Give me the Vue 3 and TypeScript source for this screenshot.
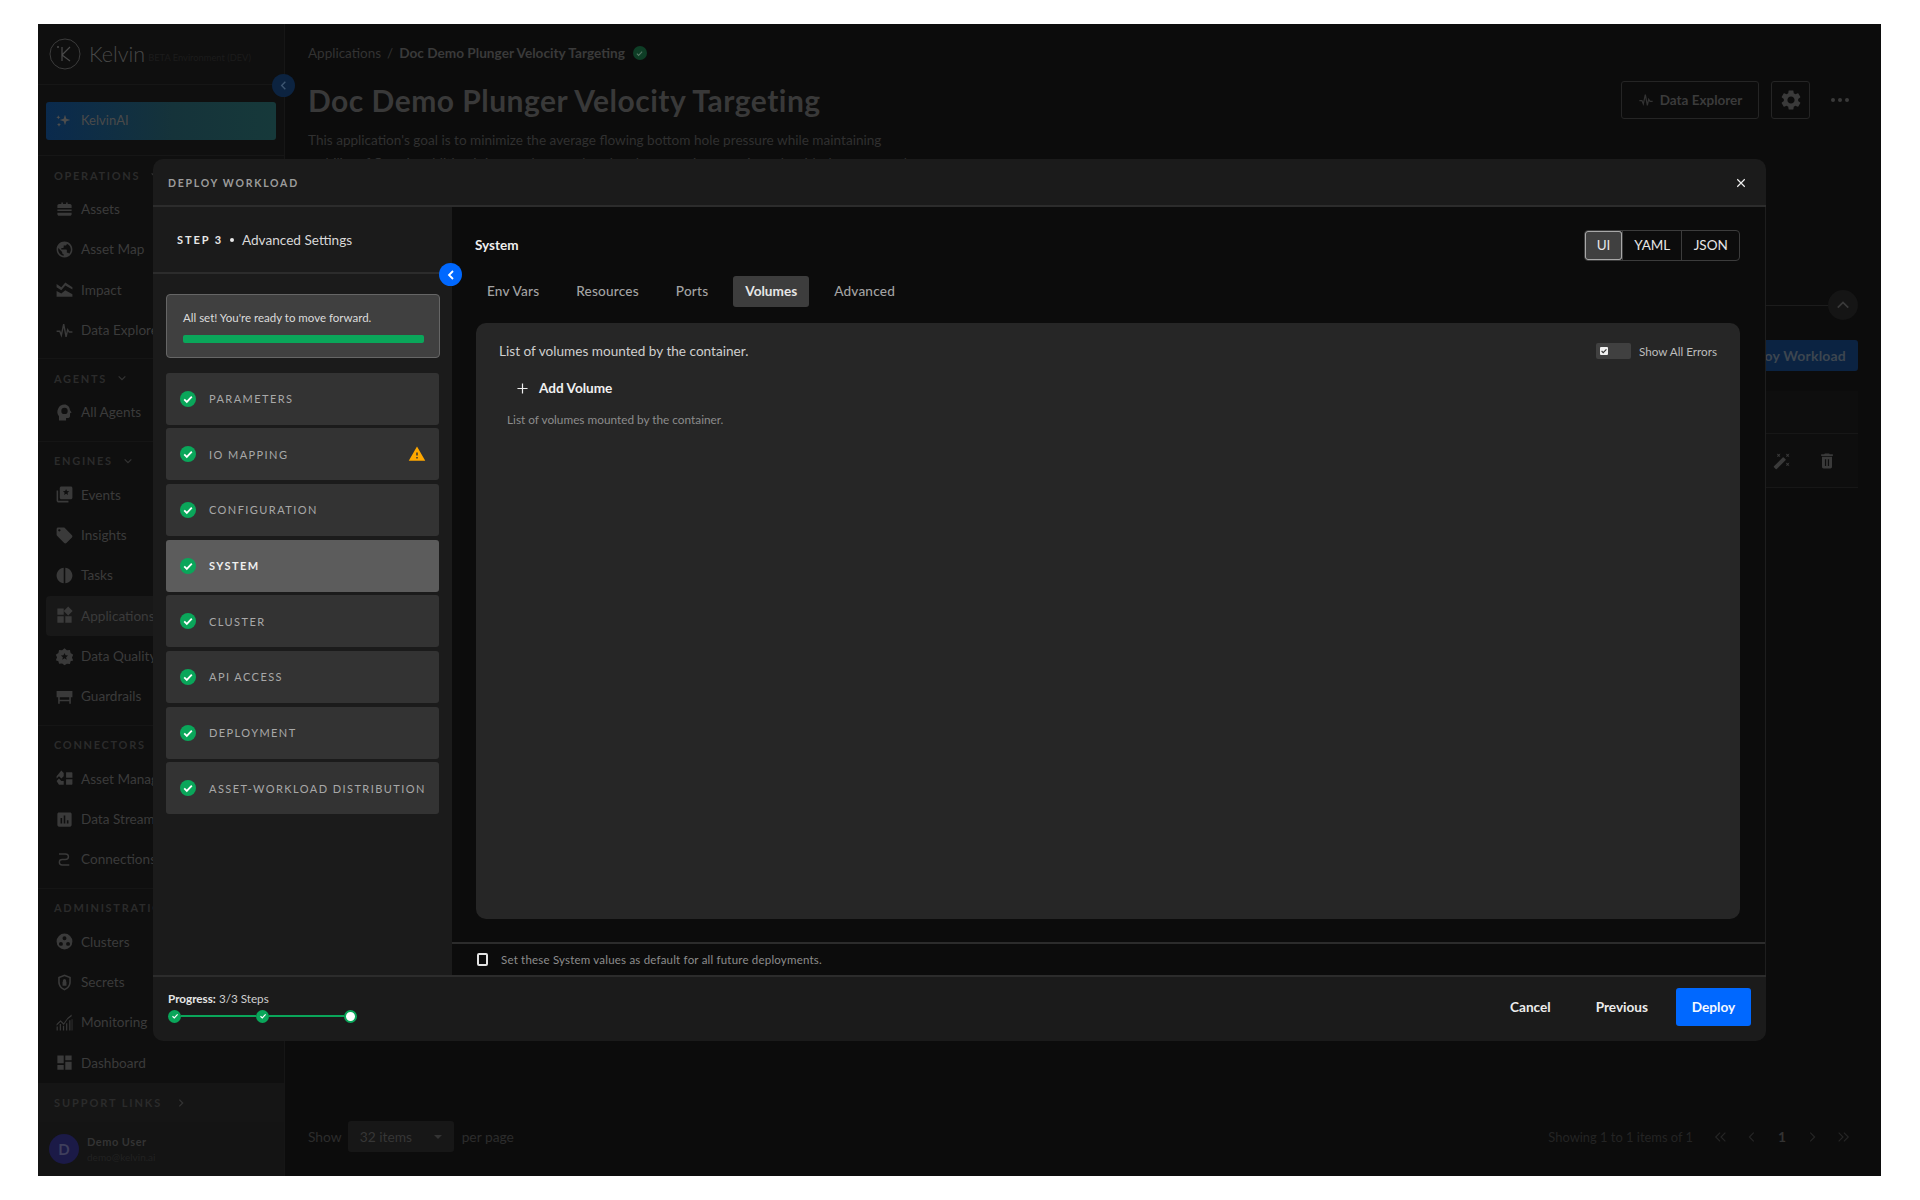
<script setup lang="ts">
import { ref } from 'vue'

interface NavItem { label: string; icon: string; stroke?: boolean; active?: boolean }
interface NavSection { title: string; chevron?: boolean; items: NavItem[] }

const P = {
  assets: 'M8 5V3h2v2h4V3h2v2h3c1 0 2 1 2 2v3H3V7c0-1 1-2 2-2h3zM3 12h18v2H3zM3 16h18v2c0 1-1 2-2 2H5c-1 0-2-1-2-2z',
  globe: 'M12 2C6.48 2 2 6.48 2 12s4.48 10 10 10 10-4.48 10-10S17.52 2 12 2zm-1 17.93c-3.95-.49-7-3.85-7-7.93 0-.62.08-1.21.21-1.79L9 15v1c0 1.1.9 2 2 2v1.93zm6.9-2.54c-.26-.81-1-1.39-1.9-1.39h-1v-3c0-.55-.45-1-1-1H8v-2h2c.55 0 1-.45 1-1V7h2c1.1 0 2-.9 2-2v-.41c2.93 1.19 5 4.06 5 7.41 0 2.08-.8 3.97-2.1 5.39z',
  impact: 'M2 5l6 4 5-6 9 6v3l-9-5-5 6-6-4zM2 14l6 3 5-4 9 5v3H2z',
  pulse: 'M2 13h4l2 5 3-14 3 16 2-9 2 3h4',
  agent: 'M12 2a9 9 0 0 0-7 14.6V22h9v-3h2c1.6 0 3-1.4 3-3v-3l2-1-2-3c-.6-4.2-3.4-7-7-7zm0 4a4 4 0 1 1-.01 8.01A4 4 0 0 1 12 6z',
  events: 'M2 7h2v13h13v2H4c-1.1 0-2-.9-2-2zM8 2h12c1.1 0 2 .9 2 2v12c0 1.1-.9 2-2 2H8c-1.1 0-2-.9-2-2V4c0-1.1.9-2 2-2zm6 3l-1.1 2.7-2.9.2 2.2 1.9-.7 2.8 2.5-1.5 2.5 1.5-.7-2.8L18 7.9l-2.9-.2z',
  tag: 'M21.41 11.58l-9-9C12.05 2.22 11.55 2 11 2H4c-1.1 0-2 .9-2 2v7c0 .55.22 1.05.59 1.42l9 9c.36.36.86.58 1.41.58.55 0 1.05-.22 1.41-.59l7-7c.37-.36.59-.86.59-1.41 0-.55-.23-1.06-.59-1.42zM5.5 7C4.67 7 4 6.33 4 5.5S4.67 4 5.5 4 7 4.67 7 5.5 6.33 7 5.5 7z',
  tasks: 'M11 2.1v19.8C5.9 21.4 2 17.1 2 12S5.9 2.6 11 2.1zM13 2.1c5.1.5 9 4.8 9 9.9s-3.9 9.4-9 9.9z',
  widgets: 'M13 13v8h8v-8h-8zM3 21h8v-8H3v8zM3 3v8h8V3H3zm13.66-2.34L11 6.31l5.66 5.66 5.66-5.66-5.66-5.65z',
  quality: 'M12 1.5l3 2.6 3.9-.3.8 3.8 3.3 2.1-1.6 3.6 1.6 3.6-3.3 1.2-.8 3.3-3.9-.3L12 23l-3-2.1-3.9.3-.8-3.3L1 16.7l1.6-3.6L1 9.7l3.3-2.1.8-3.8 3.9.3zM12 7.5l-1.3 3-3.2.2 2.5 2.1-.8 3.2 2.8-1.7 2.8 1.7-.8-3.2 2.5-2.1-3.2-.2z',
  guard: 'M2 5h20v8H2zM4 13h2v3h12v-3h2v8h-2v-3H6v3H4z',
  puzzle: 'M14 4h7c.6 0 1 .4 1 1v6h-8zM14 13h8v6c0 .6-.4 1-1 1h-7zM8 2l3 3v4l-3 3-3-3-3 3V9zM2 15l3-3 3 3 3 0v5H5z',
  chart: 'M19 3H5c-1.1 0-2 .9-2 2v14c0 1.1.9 2 2 2h14c1.1 0 2-.9 2-2V5c0-1.1-.9-2-2-2zM9 17H7v-7h2v7zm4 0h-2V7h2v10zm4 0h-2v-4h2v4z',
  route: 'M5 5h8c2.5 0 4 1.5 4 3.5S15.5 12 13 12H9c-2 0-3.500 1.500-3.500 3.500S7 19 9 19h9',
  cluster: 'M12 2a10 10 0 1 0 0 20 10 10 0 0 0 0-20zm0 3.500a2.500 2.500 0 1 1 0 5 2.500 2.500 0 0 1 0-5zM7.500 12.500a2.500 2.500 0 1 1 0 5 2.500 2.500 0 0 1 0-5zm9 0a2.500 2.500 0 1 1 0 5 2.500 2.500 0 0 1 0-5z',
  shield: 'M12 2l8 3v6.500c0 5-3.400 9.100-8 10.500-4.600-1.400-8-5.500-8-10.500V5zM12 4.100L6 6.400v5.100c0 3.900 2.500 7.200 6 8.400 3.500-1.200 6-4.500 6-8.400V6.400zM12 7.500a2 2 0 0 1 2 2V11h.500v5h-5v-5H10V9.500a2 2 0 0 1 2-2z',
  monitor: 'M2 14l5-5 4 4 5-7 5-4v2l-5 4-5 7-4-4-5 5zM2 17h1.500v5H2zM6 14h1.500v8H6zM10 16h1.500v6H10zM14 13h1.500v9H14zM18 9h1.500v13H18zM21 8h1v14h-1z',
  dash: 'M3 13h8V3H3v10zm0 8h8v-6H3v6zm10 0h8V11h-8v10zm0-18v6h8V3h-8z',
}

const sections: NavSection[] = [
  { title: 'OPERATIONS', chevron: true, items: [
    { label: 'Assets', icon: P.assets },
    { label: 'Asset Map', icon: P.globe },
    { label: 'Impact', icon: P.impact },
    { label: 'Data Explorer', icon: P.pulse, stroke: true },
  ] },
  { title: 'AGENTS', chevron: true, items: [{ label: 'All Agents', icon: P.agent }] },
  { title: 'ENGINES', chevron: true, items: [
    { label: 'Events', icon: P.events },
    { label: 'Insights', icon: P.tag },
    { label: 'Tasks', icon: P.tasks },
    { label: 'Applications', icon: P.widgets, active: true },
    { label: 'Data Quality', icon: P.quality },
    { label: 'Guardrails', icon: P.guard },
  ] },
  { title: 'CONNECTORS', items: [
    { label: 'Asset Management', icon: P.puzzle },
    { label: 'Data Streams', icon: P.chart },
    { label: 'Connections', icon: P.route, stroke: true },
  ] },
  { title: 'ADMINISTRATION', items: [
    { label: 'Clusters', icon: P.cluster },
    { label: 'Secrets', icon: P.shield },
    { label: 'Monitoring', icon: P.monitor },
    { label: 'Dashboard', icon: P.dash },
  ] },
]

const steps = ['PARAMETERS', 'IO MAPPING', 'CONFIGURATION', 'SYSTEM', 'CLUSTER', 'API ACCESS', 'DEPLOYMENT', 'ASSET-WORKLOAD DISTRIBUTION']
const tabs = ['Env Vars', 'Resources', 'Ports', 'Volumes', 'Advanced']
const activeTab = ref('Volumes')
const formats = ['UI', 'YAML', 'JSON']
const activeFormat = ref('UI')
const showErrors = ref(true)
const useDefault = ref(false)
const gear = 'M19.14 12.94c.04-.3.06-.61.06-.94 0-.32-.02-.64-.07-.94l2.03-1.58c.18-.14.23-.41.12-.61l-1.92-3.32c-.12-.22-.37-.29-.59-.22l-2.39.96c-.5-.38-1.03-.7-1.62-.94l-.36-2.54c-.04-.24-.24-.41-.48-.41h-3.84c-.24 0-.43.17-.47.41l-.36 2.54c-.59.24-1.13.57-1.62.94l-2.39-.96c-.22-.08-.47 0-.59.22L2.74 8.87c-.12.21-.08.47.12.61l2.03 1.58c-.05.3-.09.63-.09.94s.02.64.07.94l-2.03 1.58c-.18.14-.23.41-.12.61l1.92 3.32c.12.22.37.29.59.22l2.39-.96c.5.38 1.03.7 1.62.94l.36 2.54c.05.24.24.41.48.41h3.84c.24 0 .44-.17.47-.41l.36-2.54c.59-.24 1.13-.56 1.62-.94l2.39.96c.22.08.47 0 .59-.22l1.92-3.32c.12-.22.07-.47-.12-.61l-2.01-1.58zM12 15.6c-1.98 0-3.6-1.62-3.6-3.6s1.62-3.6 3.6-3.6 3.6 1.62 3.6 3.6-1.62 3.6-3.6 3.6z'
</script>

<template>
  <div class="frame">
    <aside class="sidebar">
      <div class="logo-row">
        <svg class="logo-mark" viewBox="0 0 32 32" width="32" height="32">
          <circle cx="16" cy="16" r="15" fill="none" stroke="#3c3c3c" stroke-width="1" />
          <path d="M13 9v14M21 9l-8 8 8 6" fill="none" stroke="#4a4a4a" stroke-width="1.200" />
          <circle cx="9" cy="9" r="1" fill="#4a4a4a" />
        </svg>
        <span class="logo-text">Kelvin</span>
        <span class="logo-env">BETA Environment (DEV)</span>
      </div>
      <div class="ai-wrap">
        <div class="ai-btn">
          <svg viewBox="0 0 24 24" width="16" height="16"><path fill="#4d4d4d" d="M15 4l2 6 6 2-6 2-2 6-2-6-6-2 6-2zM5 5l1 2 2 1-2 1-1 2-1-2-2-1 2-1zM6 16l1 2 2 1-2 1-1 2-1-2-2-1 2-1z" /></svg>
          <span>KelvinAI</span>
        </div>
      </div>
      <section v-for="s in sections" :key="s.title" class="nav-section">
        <div class="nav-title">
          <span>{{ s.title }}</span>
          <svg v-if="s.chevron" viewBox="0 0 12 12" width="10" height="10"><path d="M2 4l4 4 4-4" fill="none" stroke="#333" stroke-width="1.500" /></svg>
        </div>
        <div v-for="i in s.items" :key="i.label" class="nav-item" :class="{ active: i.active }">
          <svg viewBox="0 0 24 24" width="19" height="19">
            <path :d="i.icon" :fill="i.stroke ? 'none' : '#3a3a3a'" :stroke="i.stroke ? '#3a3a3a' : 'none'" :stroke-width="i.stroke ? 1.800 : 0" />
          </svg>
          <span>{{ i.label }}</span>
        </div>
      </section>
      <div class="support">
        <span>SUPPORT LINKS</span>
        <svg viewBox="0 0 12 12" width="10" height="10"><path d="M4 2l4 4-4 4" fill="none" stroke="#333" stroke-width="1.500" /></svg>
      </div>
      <div class="user">
        <div class="avatar">D</div>
        <div class="user-meta">
          <div class="user-name">Demo User</div>
          <div class="user-mail">demo@kelvin.ai</div>
        </div>
      </div>
    </aside>

    <main class="main">
      <div class="crumbs">
        <span>Applications</span><span class="sep">/</span><b>Doc Demo Plunger Velocity Targeting</b>
        <span class="crumb-ok"><svg viewBox="0 0 12 12" width="9" height="9"><path d="M2.500 6.200l2.300 2.300 4.700-5" fill="none" stroke="#5a7a68" stroke-width="1.400" /></svg></span>
      </div>
      <div class="title-row">
        <h1>Doc Demo Plunger Velocity Targeting</h1>
        <div class="title-actions">
          <button class="ghost-btn">
            <svg viewBox="0 0 24 24" width="16" height="16"><path d="M2 13h4l2 5 3-14 3 16 2-9 2 3h4" fill="none" stroke="#333" stroke-width="1.800" /></svg>
            Data Explorer
          </button>
          <button class="ghost-btn square">
            <svg viewBox="0 0 24 24" width="24" height="24"><path :d="gear" fill="#3a3a3a" /></svg>
          </button>
          <span class="dots"><i></i><i></i><i></i></span>
        </div>
      </div>
      <p class="desc">This application's goal is to minimize the average flowing bottom hole pressure while maintaining<br />stability of flow. In addition it is to make sure that the plunger arrives consistently with the proper column</p>
      <div class="divider-row">
        <span class="line"></span>
        <span class="up-btn"><svg viewBox="0 0 16 16" width="14" height="14"><path d="M2 11l6-6 6 6" fill="none" stroke="#3a3a3a" stroke-width="2" /></svg></span>
      </div>
      <div class="deploy-row"><button class="deploy-behind">Deploy Workload</button></div>
      <div class="table">
        <div class="table-head"></div>
        <div class="table-row">
          <svg viewBox="0 0 24 24" width="18" height="18"><path fill="#3a3a3a" d="M7.500 5.600L10 7 8.600 4.500 10 2 7.500 3.400 5 2l1.400 2.500L5 7zm12 9.800L17 14l1.400 2.500L17 19l2.500-1.400L22 19l-1.400-2.500L22 14zM22 2l-2.500 1.400L17 2l1.400 2.500L17 7l2.500-1.400L22 7l-1.400-2.500zm-7.630 5.290a.996.996 0 0 0-1.410 0L1.290 18.960a.996.996 0 0 0 0 1.410l2.340 2.340c.39.39 1.020.39 1.410 0L16.700 11.050a.996.996 0 0 0 0-1.410l-2.330-2.350z" /></svg>
          <svg viewBox="0 0 24 24" width="20" height="20"><path fill="#3a3a3a" d="M6 19c0 1.100.9 2 2 2h8c1.100 0 2-.9 2-2V7H6v12zM9.500 10H11v8H9.500zM13 10h1.500v8H13zM19 4h-3.500l-1-1h-5l-1 1H5v2h14V4z" /></svg>
        </div>
      </div>
      <div class="pager">
        <span>Show</span>
        <div class="pager-select"><span>32 items</span><i></i></div>
        <span>per page</span>
        <span class="pager-count">Showing 1 to 1 items of 1</span>
        <span class="pager-nav">
          <svg viewBox="0 0 16 12" width="14" height="12"><path d="M7 1L2 6l5 5M13 1L8 6l5 5" fill="none" stroke="#262626" stroke-width="1.300" /></svg>
          <svg viewBox="0 0 16 12" width="14" height="12"><path d="M10 1L5 6l5 5" fill="none" stroke="#262626" stroke-width="1.300" /></svg>
          <b>1</b>
          <svg viewBox="0 0 16 12" width="14" height="12"><path d="M6 1l5 5-5 5" fill="none" stroke="#262626" stroke-width="1.300" /></svg>
          <svg viewBox="0 0 16 12" width="14" height="12"><path d="M3 1l5 5-5 5M9 1l5 5-5 5" fill="none" stroke="#262626" stroke-width="1.300" /></svg>
        </span>
      </div>
    </main>
    <span class="side-collapse"><svg viewBox="0 0 12 12" width="11" height="11"><path d="M8 2L4 6l4 4" fill="none" stroke="#3d5570" stroke-width="1.500" /></svg></span>

    <div class="modal">
      <header class="modal-head">
        <span>DEPLOY WORKLOAD</span>
        <svg viewBox="0 0 12 12" width="10" height="10"><path d="M1.500 1.500l9 9M10.500 1.500l-9 9" stroke="#f0f0f0" stroke-width="1.400" /></svg>
      </header>
      <div class="modal-body">
        <div class="wizard">
          <div class="wizard-step"><b>STEP 3</b><i></i><span>Advanced Settings</span></div>
          <span class="wizard-collapse"><svg viewBox="0 0 12 12" width="12" height="12"><path d="M8 2L4 6l4 4" fill="none" stroke="#fff" stroke-width="1.800" /></svg></span>
          <div class="wizard-inner">
            <div class="ready">
              <div class="ready-text">All set! You're ready to move forward.</div>
              <div class="ready-bar"></div>
            </div>
            <div v-for="s in steps" :key="s" class="step" :class="{ current: s === 'SYSTEM' }">
              <span class="ok"><svg viewBox="0 0 16 16" width="16" height="16"><path d="M4.200 8.400l2.600 2.500 5-5.200" fill="none" stroke="#fff" stroke-width="1.800" /></svg></span>
              <span class="step-name">{{ s }}</span>
              <svg v-if="s === 'IO MAPPING'" class="warn" viewBox="0 0 24 24" width="18" height="18"><path fill="#ffa800" d="M1 21h22L12 2 1 21zm12-3h-2v-2h2v2zm0-4h-2v-4h2v4z" /></svg>
            </div>
          </div>
        </div>
        <div class="panel">
          <div class="panel-main">
            <div class="panel-top">
              <strong>System</strong>
              <div class="segments">
                <button v-for="f in formats" :key="f" :class="{ on: activeFormat === f }" @click="activeFormat = f">{{ f }}</button>
              </div>
            </div>
            <nav class="tabs">
              <button v-for="t in tabs" :key="t" :class="{ on: activeTab === t }" @click="activeTab = t">{{ t }}</button>
            </nav>
            <div class="card">
              <div class="card-top">
                <span>List of volumes mounted by the container.</span>
                <label class="errors" @click="showErrors = !showErrors">
                  <span class="switch"><span class="knob"><svg viewBox="0 0 10 10" width="8" height="8"><path d="M2 5l2 2 4-4" fill="none" stroke="#333" stroke-width="1.400" /></svg></span></span>
                  Show All Errors
                </label>
              </div>
              <button class="add">
                <svg viewBox="0 0 12 12" width="11" height="11"><path d="M6 .5v11M.5 6h11" stroke="#eee" stroke-width="1.300" /></svg>
                Add Volume
              </button>
              <p class="hint">List of volumes mounted by the container.</p>
            </div>
          </div>
          <div class="defaults">
            <span class="box" :class="{ on: useDefault }" @click="useDefault = !useDefault"></span>
            <span>Set these System values as default for all future deployments.</span>
          </div>
        </div>
      </div>
      <footer class="modal-foot">
        <div class="progress">
          <div class="progress-label"><b>Progress:</b> 3/3 Steps</div>
          <div class="track">
            <span class="dot"><svg viewBox="0 0 12 12" width="12" height="12"><path d="M3.500 6.200l1.800 1.700 3.300-3.500" fill="none" stroke="#fff" stroke-width="1.200" /></svg></span>
            <span class="seg"></span>
            <span class="dot"><svg viewBox="0 0 12 12" width="12" height="12"><path d="M3.500 6.200l1.800 1.700 3.300-3.500" fill="none" stroke="#fff" stroke-width="1.200" /></svg></span>
            <span class="seg"></span>
            <span class="dot end"></span>
          </div>
        </div>
        <div class="foot-actions">
          <button class="text-btn cancel">Cancel</button>
          <button class="text-btn">Previous</button>
          <button class="primary">Deploy</button>
        </div>
      </footer>
    </div>
  </div>
</template>

<style>
html, body { margin: 0; background: #fff; }
</style>

<style scoped>
* { box-sizing: border-box; }
button { font-family: inherit; border: 0; background: none; padding: 0; cursor: pointer; }
.frame {
  position: relative; display: flex; width: 1843px; height: 1152px; margin: 24px 0 24px 38px;
  overflow: hidden; background: #0c0c0c; font-family: Lato, "Liberation Sans", sans-serif; color: #3c3c3c;
}
.sidebar { width: 247px; flex: none; display: flex; flex-direction: column; background: #0f0f0f; border-right: 1px solid #161616; }
.logo-row { height: 61px; flex: none; display: flex; align-items: center; padding: 0 0 0 11px; border-bottom: 1px solid #161616; white-space: nowrap; overflow: hidden; }
.logo-text { margin-left: 8px; font-size: 21.500px; font-weight: 300; color: #484848; }
.logo-env { margin: 6px 0 0 3px; font-size: 9.300px; color: #1c1c1c; }
.ai-wrap { flex: none; height: 71px; padding: 17px 8px 0; border-bottom: 1px solid #161616; }
.ai-btn { display: flex; align-items: center; gap: 10px; height: 38px; padding: 0 0 2px 9px; border-radius: 3px; font-size: 13px; color: #4a4a4a; background: linear-gradient(90deg, #0a2a4d, #15333a 55%, #16393a); }
.nav-section { flex: none; padding: 12px 0 8px 8px; border-bottom: 1px solid #151515; }
.nav-section:nth-of-type(5) { padding-bottom: 0; border-bottom: 0; }
.nav-title { display: flex; align-items: center; gap: 10px; height: 14px; margin: 0 0 7px 8px; font-size: 11px; font-weight: 700; letter-spacing: 1.700px; color: #2b2b2b; white-space: nowrap; }
.nav-item { display: flex; align-items: center; gap: 7px; height: 40.330px; padding-left: 9px; font-size: 13.600px; color: #3b3b3b; white-space: nowrap; border-radius: 4px; }
.nav-item.active { background: #181818; }
.support { flex: none; display: flex; align-items: center; gap: 14px; height: 39px; margin-top: auto; padding-left: 16px; background: #151515; font-size: 11px; font-weight: 700; letter-spacing: 1.900px; color: #2b2b2b; }
.user { flex: none; display: flex; align-items: center; gap: 8px; height: 54px; padding-left: 11px; background: #141414; }
.avatar { width: 30px; height: 30px; border-radius: 50%; display: flex; align-items: center; justify-content: center; background: #1b1a47; color: #3f3f5c; font-size: 15px; font-weight: 700; }
.user-name { font-size: 11px; font-weight: 700; letter-spacing: .5px; color: #333; }
.user-mail { margin-top: 3px; font-size: 10px; color: #222; }
.side-collapse { position: absolute; left: 234px; top: 50px; width: 23px; height: 23px; border-radius: 50%; display: flex; align-items: center; justify-content: center; background: #0c2340; }

.main { flex: 1; min-width: 0; display: flex; flex-direction: column; padding: 20px 23px 0 23px; }
.crumbs { display: flex; align-items: center; height: 18px; font-size: 13.500px; color: #333; white-space: nowrap; }
.crumbs b { font-size: 13.650px; font-weight: 700; color: #3a3a3a; }
.sep { margin: 0 6px; }
.crumb-ok { width: 14px; height: 14px; margin-left: 8px; border-radius: 50%; display: flex; align-items: center; justify-content: center; background: #0e3e26; }
.title-row { display: flex; justify-content: space-between; align-items: center; height: 38px; margin-top: 19px; }
h1 { margin: 0; font-size: 30px; font-weight: 700; color: #393939; white-space: nowrap; letter-spacing: .48px; }
.title-actions { display: flex; align-items: center; margin-right: 9px; }
.ghost-btn { display: flex; align-items: center; justify-content: center; gap: 6px; width: 138px; height: 38px; border: 1px solid #252525; border-radius: 3px; color: #3b3b3b; font-size: 13.500px; font-weight: 700; }
.ghost-btn.square { width: 39px; margin-left: 12px; }
.dots { display: flex; gap: 3px; margin-left: 21px; }
.dots i { width: 4px; height: 4px; border-radius: 50%; background: #3a3a3a; }
.desc { margin: 10px 0 0; font-size: 13.600px; line-height: 23px; color: #303030; height: 46px; white-space: nowrap; }
.divider-row { display: flex; align-items: center; margin-top: 115px; height: 30px; }
.line { flex: 1; height: 1px; background: #1c1c1c; }
.up-btn { width: 30px; height: 30px; border-radius: 50%; display: flex; align-items: center; justify-content: center; background: #151515; }
.deploy-row { display: flex; justify-content: flex-end; margin-top: 20px; }
.deploy-behind { padding: 0 12px; height: 31px; border-radius: 3px; background: #0b2342; color: #3d4650; font-size: 14px; font-weight: 700; letter-spacing: .2px; }
.table { margin-top: 20px; background: #0e0e0e; }
.table-head { height: 43px; border-bottom: 1px solid #171717; }
.table-row { height: 54px; display: flex; align-items: center; justify-content: flex-end; gap: 26px; padding-right: 21px; border-bottom: 1px solid #171717; }
.pager { display: flex; align-items: center; margin-top: auto; margin-bottom: 24px; font-size: 13.800px; color: #2c2c2c; }
.pager-select { display: flex; align-items: center; justify-content: space-between; width: 106px; height: 31px; margin: 0 8px 0 6px; padding: 0 12px; border-radius: 3px; background: #171717; color: #363636; }
.pager-select i { border: 4px solid transparent; border-top-color: #333; border-bottom: 0; }
.pager-count { margin-left: auto; font-size: 12.900px; color: #242424; }
.pager-nav { display: flex; align-items: center; gap: 17px; margin: 0 8px 0 21px; }
.pager-nav b { min-width: 12px; text-align: center; color: #333; font-weight: 700; }

.modal { position: absolute; left: 115px; top: 135px; width: 1613px; height: 882px; display: flex; flex-direction: column; border-radius: 10px; background: #1b1b1b; overflow: hidden; }
.modal-head { flex: none; height: 48px; display: flex; align-items: center; justify-content: space-between; padding: 1px 20px 0 15px; border-bottom: 2px solid #2c2c2c; font-size: 10.500px; font-weight: 700; letter-spacing: 1.750px; color: #9c9c9c; }
.modal-body { flex: 1; display: flex; min-height: 0; }
.wizard { position: relative; width: 299px; flex: none; }
.wizard-step { display: flex; align-items: center; height: 67px; padding-left: 24px; border-bottom: 2px solid #2c2c2c; font-size: 13.600px; color: #d8d8d8; }
.wizard-step b { font-size: 11px; font-weight: 700; letter-spacing: 1.900px; color: #e8e8e8; }
.wizard-step i { width: 4px; height: 4px; margin: 0 8px 0 7px; border-radius: 50%; background: #e8e8e8; }
.wizard-collapse { position: absolute; right: -10px; top: 56px; z-index: 2; width: 23px; height: 23px; border-radius: 50%; display: flex; align-items: center; justify-content: center; background: #0068ff; }
.wizard-inner { display: flex; flex-direction: column; gap: 3.670px; padding: 20px 12px 0 13px; }
.ready { width: 274px; height: 64px; margin-bottom: 11px; padding: 16px 15px 0 16px; border: 1px solid #666; border-radius: 4px; background: #404040; }
.ready-text { font-size: 11.500px; line-height: 14px; color: #dcdcdc; }
.ready-bar { height: 8px; margin-top: 10px; border-radius: 2px; background: #0aa65a; }
.step { position: relative; display: flex; align-items: center; width: 273px; height: 52px; padding-left: 14px; border-radius: 3px; background: #333; }
.step.current { background: #5c5c5c; }
.ok { width: 16px; height: 16px; border-radius: 50%; background: #0aa65a; display: flex; }
.step-name { margin-left: 13px; font-size: 11px; font-weight: 400; letter-spacing: 1.430px; color: #a8a8a8; white-space: nowrap; }
.step.current .step-name { font-weight: 700; color: #efefef; }
.warn { position: absolute; right: 13px; top: 17px; }
.panel { flex: 1; min-width: 0; display: flex; flex-direction: column; background: #0c0c0c; border-right: 1px solid #1e1e1e; }
.panel-main { flex: 1; min-height: 0; display: flex; flex-direction: column; padding: 23px 25px 23px 23px; }
.panel-top { display: flex; align-items: center; justify-content: space-between; height: 31px; }
.panel-top strong { margin-bottom: 2px; font-size: 13.500px; font-weight: 700; color: #efefef; }
.segments { display: flex; width: 156px; height: 31px; border: 1px solid #3c3c3c; border-radius: 4px; overflow: hidden; }
.segments button { flex: 1 1 auto; padding-bottom: 1px; color: #e6e6e6; font-size: 13.500px; border-left: 1px solid #3c3c3c; }
.segments button:first-child { border-left: 0; }
.segments .on { flex: 0 0 37px; background: #404040; box-shadow: inset 0 0 0 1px #a8a8a8; border-radius: 3px; }
.tabs { display: flex; gap: 13px; margin-top: 15px; height: 31px; }
.tabs button { padding: 0 12px 1px; border-radius: 3px; color: #a3a3a3; font-size: 13.600px; font-weight: 500; letter-spacing: .2px; }
.tabs .on { background: #3d3d3d; color: #e6e6e6; font-weight: 700; letter-spacing: 0; }
.card { flex: 1; min-height: 0; margin-top: 16px; margin-left: 1px; padding: 18px 23px; border-radius: 10px; background: #262626; }
.card-top { display: flex; justify-content: space-between; align-items: center; height: 20px; font-size: 13.600px; color: #cfcfcf; }
.errors { display: flex; align-items: center; gap: 8px; font-size: 11.700px; color: #bdbdbd; cursor: pointer; }
.switch { width: 35px; height: 16px; padding: 4px 0 0 4px; border-radius: 2px; background: #404040; display: block; }
.knob { width: 8px; height: 8px; background: #f0f0f0; display: flex; border-radius: 1px; }
.add { display: flex; align-items: center; gap: 11px; margin: 16px 0 0 18px; height: 22px; color: #f0f0f0; font-size: 13.600px; font-weight: 700; }
.hint { margin: 13px 0 0 8px; font-size: 11.800px; line-height: 16px; color: #8c8c8c; }
.defaults { flex: none; display: flex; align-items: center; gap: 13px; height: 33px; padding-left: 25px; border-top: 2px solid #2c2c2c; font-size: 11.500px; letter-spacing: .2px; color: #8c8c8c; }
.box { width: 11px; height: 13px; border: 2px solid #e4e4e4; border-radius: 2px; }
.modal-foot { flex: none; height: 66px; display: flex; align-items: center; justify-content: space-between; padding: 0 15px 5px; border-top: 2px solid #2c2c2c; }
.progress-label { font-size: 11.700px; line-height: 14px; color: #cfcfcf; }
.progress-label b { font-weight: 700; color: #e6e6e6; }
.track { display: flex; align-items: center; margin-top: 5px; }
.dot { width: 13px; height: 13px; flex: none; border-radius: 50%; background: #0aa65a; display: flex; align-items: center; justify-content: center; }
.dot.end { background: #fff; border: 2px solid #0aa65a; }
.seg { width: 75px; height: 2px; background: #0aa65a; }
.foot-actions { display: flex; align-items: center; }
.text-btn { color: #ececec; font-size: 13.600px; font-weight: 700; padding: 0 25px; height: 38px; }
.text-btn.cancel { margin-right: -5px; }
.primary { width: 75px; height: 38px; margin-left: 3px; border-radius: 3px; background: #0068ff; color: #f4f8ff; font-size: 13.600px; font-weight: 700; }
</style>
